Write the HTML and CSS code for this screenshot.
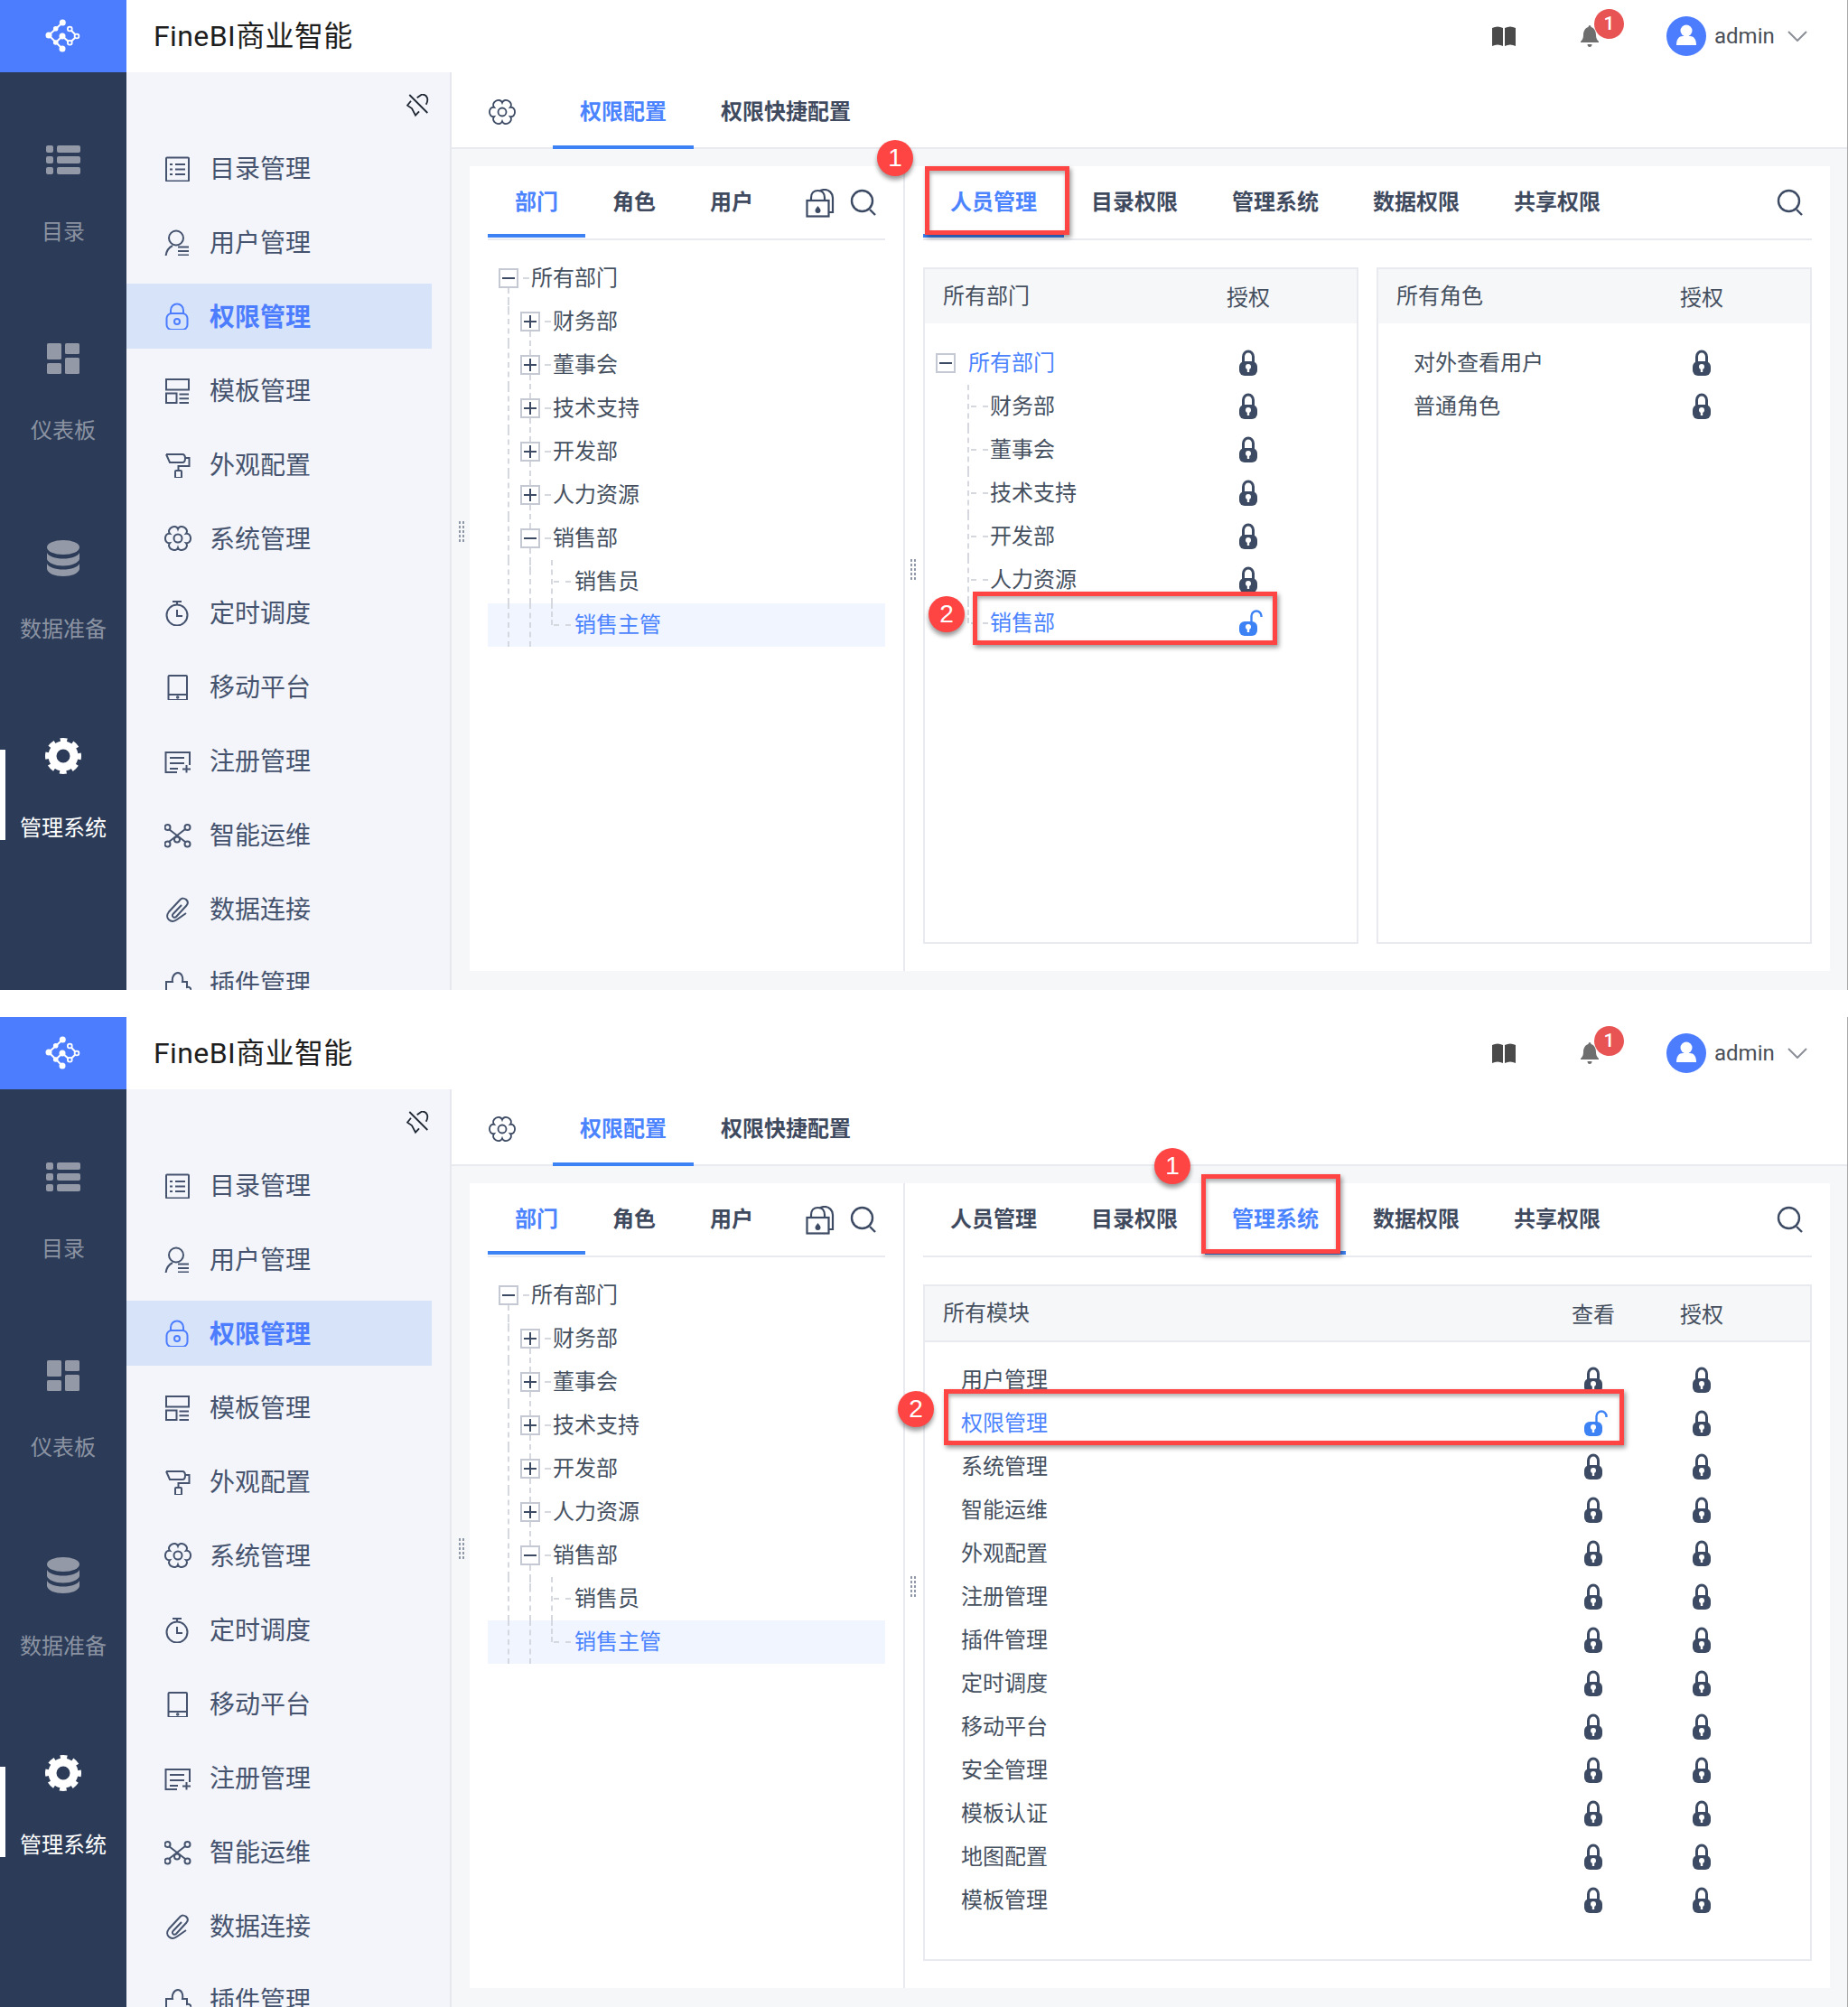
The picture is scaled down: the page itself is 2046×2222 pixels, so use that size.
FILE: index.html
```html
<!DOCTYPE html>
<html lang="zh-CN">
<head>
<meta charset="utf-8">
<title>FineBI商业智能</title>
<link rel="stylesheet" href="styles.css">
</head>
<body>
<svg class="sprite" xmlns="http://www.w3.org/2000/svg">
  <symbol id="logo" viewBox="0 0 40 40">
    <g fill="none" stroke="#fff" stroke-width="2"><path d="M19.300 5 4 19 19 34M19 20l-7.300 7M19 20l8.300 7.300L35 20l-7.700-8"/></g>
    <g fill="#fff"><circle cx="19.300" cy="5" r="3.500"/><circle cx="4" cy="19" r="3.500"/><circle cx="19" cy="34" r="3.500"/><circle cx="19" cy="20" r="3.500"/><circle cx="11.700" cy="11.700" r="2.800"/><circle cx="11.700" cy="27" r="2.800"/></g>
    <g fill="#4c7dff" stroke="#fff" stroke-width="1.800"><circle cx="27.300" cy="12" r="2.400"/><circle cx="35" cy="20" r="2.400"/><circle cx="27.300" cy="27.300" r="2.400"/></g>
  </symbol>
  <symbol id="r-list" viewBox="0 0 38 32"><rect width="8" height="8" rx="2"/><rect x="12" width="26" height="8" rx="2"/><rect y="12" width="8" height="8" rx="2"/><rect x="12" y="12" width="26" height="8" rx="2"/><rect y="24" width="8" height="8" rx="2"/><rect x="12" y="24" width="26" height="8" rx="2"/></symbol>
  <symbol id="r-dash" viewBox="0 0 36 34"><rect width="16" height="18" rx="1.500"/><rect x="20" width="16" height="12" rx="1.500"/><rect y="22" width="16" height="12" rx="1.500"/><rect x="20" y="16" width="16" height="18" rx="1.500"/></symbol>
  <symbol id="r-db" viewBox="0 0 36 40"><ellipse cx="18" cy="8" rx="18" ry="8"/><path d="M0 14c2 4 9 6.500 18 6.500S34 18 36 14v7c-1 4-9 7.500-18 7.500S1 25 0 21zM0 26c2 4 9 6.500 18 6.500S34 30 36 26v6c-1 5-9 8-18 8S1 37 0 32z"/></symbol>
  <symbol id="r-gear" viewBox="0 0 40 40"><circle cx="20" cy="20" r="12" fill="none" stroke="currentColor" stroke-width="9"/><circle cx="20" cy="20" r="17.500" fill="none" stroke="currentColor" stroke-width="5" stroke-dasharray="7.500 6.240" stroke-dashoffset="3.750"/></symbol>
  <symbol id="n-cat" viewBox="0 0 30 30"><rect x="2" y="3.500" width="25" height="26" rx="1"/><path d="M6 11h3M12 11h11M6 16.500h3M12 16.500h11M6 22h3M12 22h11"/></symbol>
  <symbol id="n-user" viewBox="0 0 30 30"><circle cx="13" cy="10.500" r="8"/><path d="M1.500 31C2 25 5 21 9 19M15 20.500h12M15 25h12M15 29.500h12"/></symbol>
  <symbol id="n-lock" viewBox="0 0 30 30"><rect x="2.500" y="12" width="23" height="18" rx="5.500"/><path d="M7 12V8.500a7 7 0 0 1 14 0V12"/><circle cx="14" cy="21" r="3"/></symbol>
  <symbol id="n-tpl" viewBox="0 0 30 30"><rect x="2" y="3" width="25" height="11.500"/><path d="M2 18.500h11.500V29H2zM16.500 19.500H27M16.500 24.200H27M16.500 29H27"/></symbol>
  <symbol id="n-roll" viewBox="0 0 30 30"><path d="M2 4h18c2 0 3 1.500 3 4.500s-1 4.500-3 4.500H6L2 4M23 8h4.500v9H15.500v5"/><rect x="12" y="22" width="7" height="8" rx="1"/></symbol>
  <symbol id="n-gear" viewBox="0 0 30 30"><circle cx="15" cy="15" r="4.500"/><path d="M23.920 9.850C30.760 8.630 30.760 21.370 23.920 20.150C28.400 25.470 17.370 31.830 15 25.300C12.630 31.830 1.600 25.470 6.080 20.150C-.76 21.370-.76 8.630 6.080 9.850C1.600 4.530 12.630-1.830 15 4.700C17.370-1.830 28.400 4.530 23.920 9.850z"/></symbol>
  <symbol id="n-time" viewBox="0 0 30 30"><circle cx="14" cy="18" r="11.500"/><path d="M9 3h10M14 3v3M14 12v7h6"/></symbol>
  <symbol id="n-mob" viewBox="0 0 30 30"><rect x="4.500" y="3" width="20.500" height="27" rx="1"/><path d="M4.500 24h20.500"/><circle cx="14.700" cy="27" r=".8"/></symbol>
  <symbol id="n-reg" viewBox="0 0 30 30"><path d="M14 28H1.500V6H28v14M6 12h16M6 18h16M6 24h9M20 24.500h9M24.500 20v8.500"/></symbol>
  <symbol id="n-ops" viewBox="0 0 30 30"><path d="m5 9 18 14M23 9 5 23"/><circle cx="14" cy="20.500" r="3" fill="#f3f5fa"/><g fill="#f3f5fa"><circle cx="3.500" cy="7" r="3"/><circle cx="25.500" cy="7" r="3"/><circle cx="3.500" cy="25.500" r="3"/><circle cx="25.500" cy="25.500" r="3"/></g></symbol>
  <symbol id="n-clip" viewBox="0 0 30 30"><path d="M19 11 9.500 21c-2 2.500 1.500 5 3.500 3L24.500 11.500c4-5-3-10.500-7-6.500L5 18.500c-5.500 7 2.500 13.500 9 8.500L24 20"/></symbol>
  <symbol id="n-plug" viewBox="0 0 30 30"><path d="M2 34V14h7c-1-5 2-10 6-10s6 5 5 10h5v6c4-1 5 3 5 5"/></symbol>
  <symbol id="pin" viewBox="0 0 26 26"><path d="M3.300 1l20 20M11.700 4.300 16.700.7C23 0 25 6 21.700 11.700M5 7.700 1 12.700 6 16l4 7.700 4-4.400"/></symbol>
  <symbol id="book" viewBox="0 0 26 22"><path d="M0 2c4-2 8-2 12 0v20c-4-2-8-2-12 0zM14 2c4-2 8-2 12 0v20c-4-2-8-2-12 0z"/></symbol>
  <symbol id="bell" viewBox="0 0 20 24"><path d="M10 0c1 0 1.500 1 1.500 2 4 1 5.500 5 5.500 9 0 3 1 5 3 7v1H0v-1c2-2 3-4 3-7 0-4 1.500-8 5.500-9C8.500 1 9 0 10 0zM7.500 21h5c0 2-1 3-2.500 3s-2.500-1-2.500-3z"/></symbol>
  <symbol id="avatar" viewBox="0 0 44 44"><circle cx="22" cy="22" r="22" fill="#4c7dff"/><circle cx="22" cy="16" r="6.500" fill="#fff"/><path d="M11 32c0-7 3-10 7-10h8c4 0 7 3 7 10z" fill="#fff"/></symbol>
  <symbol id="chev" viewBox="0 0 22 12"><path d="m1 1 10 10L21 1"/></symbol>
  <symbol id="search" viewBox="0 0 30 30"><circle cx="13.500" cy="13.500" r="11.500"/><path d="m22 23 6 6"/></symbol>
  <symbol id="locks" viewBox="0 0 32 32"><rect x="1.500" y="13" width="24" height="17.500"/><path d="M6 13V10c0-5 3-8 7.500-8s7.500 3 7.500 8v3M15 3c2-2 4-2 6-2 5 0 9 4 9 9v16h-4.500"/><path d="M13.500 19c2 2.500 3 3.500 3 5a3 3 0 0 1-6 0c0-1.500 1-2.500 3-5z" fill="currentColor" stroke="none"/></symbol>
  <symbol id="lock" viewBox="0 0 26 29"><path d="M4.500 14V8a5.500 6 0 0 1 11 0v6" fill="none" stroke="currentColor" stroke-width="3"/><path d="M6 13h8a6 6 0 0 1 6 6v4a6 6 0 0 1-6 6H6a6 6 0 0 1-6-6v-4a6 6 0 0 1 6-6z" fill="currentColor"/><circle cx="10" cy="19" r="3" fill="#fff"/><rect x="8.800" y="19" width="2.400" height="6" fill="#fff"/></symbol>
  <symbol id="unlock" viewBox="0 0 26 29"><path d="M13.500 14V7a5.500 5.500 0 0 1 11 0v1" fill="none" stroke="currentColor" stroke-width="2.400"/><path d="M6 13h8a6 6 0 0 1 6 6v4a6 6 0 0 1-6 6H6a6 6 0 0 1-6-6v-4a6 6 0 0 1 6-6z" fill="currentColor"/><circle cx="10" cy="19" r="3" fill="#fff"/><rect x="8.800" y="19" width="2.400" height="6" fill="#fff"/></symbol>
  <symbol id="plus" viewBox="0 0 22 22"><rect x="1" y="1" width="20" height="20" fill="#fff" stroke="#c5c9d3" stroke-width="2"/><path d="M4 11h14M11 4v14" stroke="#3d4a63" stroke-width="2"/></symbol>
  <symbol id="minus" viewBox="0 0 22 22"><rect x="1" y="1" width="20" height="20" fill="#fff" stroke="#c5c9d3" stroke-width="2"/><path d="M4 11h14" stroke="#3d4a63" stroke-width="2"/></symbol>
</svg>

<section class="shot">
  <aside class="rail">
    <div class="logo"><svg class="logo-ic"><use href="#logo"/></svg></div>
    <nav class="rail-nav">
      <div class="rail-item"><div class="rail-ic"><svg class="ic-list"><use href="#r-list"/></svg></div><div class="rail-label">目录</div></div>
      <div class="rail-item"><div class="rail-ic"><svg class="ic-dash"><use href="#r-dash"/></svg></div><div class="rail-label">仪表板</div></div>
      <div class="rail-item"><div class="rail-ic"><svg class="ic-db"><use href="#r-db"/></svg></div><div class="rail-label">数据准备</div></div>
      <div class="rail-item active"><div class="rail-ic"><svg class="ic-gear"><use href="#r-gear"/></svg></div><div class="rail-label">管理系统</div></div>
    </nav>
  </aside>
  <div class="main">
    <header class="topbar">
      <h1 class="title">FineBI商业智能</h1>
      <div class="tools">
        <svg class="ic-book"><use href="#book"/></svg>
        <span class="bell"><svg class="ic-bell"><use href="#bell"/></svg><b class="badge">1</b></span>
        <svg class="ic-avatar"><use href="#avatar"/></svg>
        <span class="uname">admin</span>
        <svg class="ic-chev"><use href="#chev"/></svg>
      </div>
    </header>
    <div class="work">
      <nav class="subnav">
        <div class="pinrow"><svg class="ic-pin"><use href="#pin"/></svg></div>
        <div class="sub-item"><svg class="ni"><use href="#n-cat"/></svg>目录管理</div>
        <div class="sub-item"><svg class="ni"><use href="#n-user"/></svg>用户管理</div>
        <div class="sub-item on"><svg class="ni"><use href="#n-lock"/></svg>权限管理</div>
        <div class="sub-item"><svg class="ni"><use href="#n-tpl"/></svg>模板管理</div>
        <div class="sub-item"><svg class="ni"><use href="#n-roll"/></svg>外观配置</div>
        <div class="sub-item"><svg class="ni"><use href="#n-gear"/></svg>系统管理</div>
        <div class="sub-item"><svg class="ni"><use href="#n-time"/></svg>定时调度</div>
        <div class="sub-item"><svg class="ni"><use href="#n-mob"/></svg>移动平台</div>
        <div class="sub-item"><svg class="ni"><use href="#n-reg"/></svg>注册管理</div>
        <div class="sub-item"><svg class="ni"><use href="#n-ops"/></svg>智能运维</div>
        <div class="sub-item"><svg class="ni"><use href="#n-clip"/></svg>数据连接</div>
        <div class="sub-item"><svg class="ni"><use href="#n-plug"/></svg>插件管理</div>
      </nav>
      <div class="content">
        <div class="pagetabs">
          <svg class="ic-set"><use href="#n-gear"/></svg>
          <span class="ptab on">权限配置</span>
          <span class="ptab">权限快捷配置</span>
        </div>
        <div class="cards">
          <div class="card-left">
            <div class="tabs">
              <span class="tab on">部门</span><span class="tab">角色</span><span class="tab">用户</span>
              <span class="tab-tools"><svg class="ic-locks"><use href="#locks"/></svg><svg class="ic-search"><use href="#search"/></svg></span>
            </div>
            <div class="tree">
              <div class="tnode"><span class="tog"><svg class="bx"><use href="#minus"/></svg></span>所有部门</div>
              <div class="tnode"><i class="ind"></i><span class="tog"><svg class="bx"><use href="#plus"/></svg></span>财务部</div>
              <div class="tnode"><i class="ind"></i><span class="tog"><svg class="bx"><use href="#plus"/></svg></span>董事会</div>
              <div class="tnode"><i class="ind"></i><span class="tog"><svg class="bx"><use href="#plus"/></svg></span>技术支持</div>
              <div class="tnode"><i class="ind"></i><span class="tog"><svg class="bx"><use href="#plus"/></svg></span>开发部</div>
              <div class="tnode"><i class="ind"></i><span class="tog"><svg class="bx"><use href="#plus"/></svg></span>人力资源</div>
              <div class="tnode"><i class="ind"></i><span class="tog"><svg class="bx"><use href="#minus"/></svg></span>销售部</div>
              <div class="tnode"><i class="ind"></i><i class="ind"></i><i class="leaf"></i>销售员</div>
              <div class="tnode sel"><i class="ind"></i><i class="ind"></i><i class="leaf last"></i>销售主管</div>
            </div>
          </div>
          <div class="card-right">
            <div class="tabs">
              <span class="tab wide on">人员管理</span><span class="tab wide">目录权限</span><span class="tab wide">管理系统</span><span class="tab wide">数据权限</span><span class="tab wide">共享权限</span>
              <span class="tab-tools"><svg class="ic-search"><use href="#search"/></svg></span>
            </div>
            <div class="panels">
              <div class="panel">
                <div class="phead"><span class="pname">所有部门</span><span class="pcell">授权</span></div>
                <div class="pbody">
                  <div class="prow"><span class="pname tr blue"><svg class="bx bx-p"><use href="#minus"/></svg>所有部门</span><span class="pcell"><svg class="lk"><use href="#lock"/></svg></span></div>
                  <div class="prow"><span class="pname tr"><i class="leaf pl"></i>财务部</span><span class="pcell"><svg class="lk"><use href="#lock"/></svg></span></div>
                  <div class="prow"><span class="pname tr"><i class="leaf pl"></i>董事会</span><span class="pcell"><svg class="lk"><use href="#lock"/></svg></span></div>
                  <div class="prow"><span class="pname tr"><i class="leaf pl"></i>技术支持</span><span class="pcell"><svg class="lk"><use href="#lock"/></svg></span></div>
                  <div class="prow"><span class="pname tr"><i class="leaf pl"></i>开发部</span><span class="pcell"><svg class="lk"><use href="#lock"/></svg></span></div>
                  <div class="prow"><span class="pname tr"><i class="leaf pl"></i>人力资源</span><span class="pcell"><svg class="lk"><use href="#lock"/></svg></span></div>
                  <div class="prow"><span class="pname tr blue"><i class="leaf pl last"></i>销售部</span><span class="pcell"><svg class="lk blue"><use href="#unlock"/></svg></span></div>
                </div>
              </div>
              <div class="panel">
                <div class="phead"><span class="pname">所有角色</span><span class="pcell">授权</span></div>
                <div class="pbody">
                  <div class="prow"><span class="pname role">对外查看用户</span><span class="pcell"><svg class="lk"><use href="#lock"/></svg></span></div>
                  <div class="prow"><span class="pname role">普通角色</span><span class="pcell"><svg class="lk"><use href="#lock"/></svg></span></div>
                </div>
              </div>
            </div>
          </div>
        </div>
      </div>
    </div>
  </div>
  <i class="split split-a"></i><i class="split split-b"></i>
  <div class="mark mark-t1"></div>
  <div class="mark mark-r1"></div>
  <b class="num num-a1">1</b>
  <b class="num num-b1">2</b>
</section>

<section class="shot">
  <aside class="rail">
    <div class="logo"><svg class="logo-ic"><use href="#logo"/></svg></div>
    <nav class="rail-nav">
      <div class="rail-item"><div class="rail-ic"><svg class="ic-list"><use href="#r-list"/></svg></div><div class="rail-label">目录</div></div>
      <div class="rail-item"><div class="rail-ic"><svg class="ic-dash"><use href="#r-dash"/></svg></div><div class="rail-label">仪表板</div></div>
      <div class="rail-item"><div class="rail-ic"><svg class="ic-db"><use href="#r-db"/></svg></div><div class="rail-label">数据准备</div></div>
      <div class="rail-item active"><div class="rail-ic"><svg class="ic-gear"><use href="#r-gear"/></svg></div><div class="rail-label">管理系统</div></div>
    </nav>
  </aside>
  <div class="main">
    <header class="topbar">
      <h1 class="title">FineBI商业智能</h1>
      <div class="tools">
        <svg class="ic-book"><use href="#book"/></svg>
        <span class="bell"><svg class="ic-bell"><use href="#bell"/></svg><b class="badge">1</b></span>
        <svg class="ic-avatar"><use href="#avatar"/></svg>
        <span class="uname">admin</span>
        <svg class="ic-chev"><use href="#chev"/></svg>
      </div>
    </header>
    <div class="work">
      <nav class="subnav">
        <div class="pinrow"><svg class="ic-pin"><use href="#pin"/></svg></div>
        <div class="sub-item"><svg class="ni"><use href="#n-cat"/></svg>目录管理</div>
        <div class="sub-item"><svg class="ni"><use href="#n-user"/></svg>用户管理</div>
        <div class="sub-item on"><svg class="ni"><use href="#n-lock"/></svg>权限管理</div>
        <div class="sub-item"><svg class="ni"><use href="#n-tpl"/></svg>模板管理</div>
        <div class="sub-item"><svg class="ni"><use href="#n-roll"/></svg>外观配置</div>
        <div class="sub-item"><svg class="ni"><use href="#n-gear"/></svg>系统管理</div>
        <div class="sub-item"><svg class="ni"><use href="#n-time"/></svg>定时调度</div>
        <div class="sub-item"><svg class="ni"><use href="#n-mob"/></svg>移动平台</div>
        <div class="sub-item"><svg class="ni"><use href="#n-reg"/></svg>注册管理</div>
        <div class="sub-item"><svg class="ni"><use href="#n-ops"/></svg>智能运维</div>
        <div class="sub-item"><svg class="ni"><use href="#n-clip"/></svg>数据连接</div>
        <div class="sub-item"><svg class="ni"><use href="#n-plug"/></svg>插件管理</div>
      </nav>
      <div class="content">
        <div class="pagetabs">
          <svg class="ic-set"><use href="#n-gear"/></svg>
          <span class="ptab on">权限配置</span>
          <span class="ptab">权限快捷配置</span>
        </div>
        <div class="cards">
          <div class="card-left">
            <div class="tabs">
              <span class="tab on">部门</span><span class="tab">角色</span><span class="tab">用户</span>
              <span class="tab-tools"><svg class="ic-locks"><use href="#locks"/></svg><svg class="ic-search"><use href="#search"/></svg></span>
            </div>
            <div class="tree">
              <div class="tnode"><span class="tog"><svg class="bx"><use href="#minus"/></svg></span>所有部门</div>
              <div class="tnode"><i class="ind"></i><span class="tog"><svg class="bx"><use href="#plus"/></svg></span>财务部</div>
              <div class="tnode"><i class="ind"></i><span class="tog"><svg class="bx"><use href="#plus"/></svg></span>董事会</div>
              <div class="tnode"><i class="ind"></i><span class="tog"><svg class="bx"><use href="#plus"/></svg></span>技术支持</div>
              <div class="tnode"><i class="ind"></i><span class="tog"><svg class="bx"><use href="#plus"/></svg></span>开发部</div>
              <div class="tnode"><i class="ind"></i><span class="tog"><svg class="bx"><use href="#plus"/></svg></span>人力资源</div>
              <div class="tnode"><i class="ind"></i><span class="tog"><svg class="bx"><use href="#minus"/></svg></span>销售部</div>
              <div class="tnode"><i class="ind"></i><i class="ind"></i><i class="leaf"></i>销售员</div>
              <div class="tnode sel"><i class="ind"></i><i class="ind"></i><i class="leaf last"></i>销售主管</div>
            </div>
          </div>
          <div class="card-right">
            <div class="tabs">
              <span class="tab wide">人员管理</span><span class="tab wide">目录权限</span><span class="tab wide on">管理系统</span><span class="tab wide">数据权限</span><span class="tab wide">共享权限</span>
              <span class="tab-tools"><svg class="ic-search"><use href="#search"/></svg></span>
            </div>
            <div class="panels">
              <div class="panel">
                <div class="phead lined"><span class="pname">所有模块</span><span class="pcell mc">查看</span><span class="pcell mc">授权</span></div>
                <div class="pbody">
                  <div class="prow mod"><span class="pname role">用户管理</span><span class="pcell mc"><svg class="lk"><use href="#lock"/></svg></span><span class="pcell mc"><svg class="lk"><use href="#lock"/></svg></span></div>
                  <div class="prow mod"><span class="pname role blue">权限管理</span><span class="pcell mc"><svg class="lk blue"><use href="#unlock"/></svg></span><span class="pcell mc"><svg class="lk"><use href="#lock"/></svg></span></div>
                  <div class="prow mod"><span class="pname role">系统管理</span><span class="pcell mc"><svg class="lk"><use href="#lock"/></svg></span><span class="pcell mc"><svg class="lk"><use href="#lock"/></svg></span></div>
                  <div class="prow mod"><span class="pname role">智能运维</span><span class="pcell mc"><svg class="lk"><use href="#lock"/></svg></span><span class="pcell mc"><svg class="lk"><use href="#lock"/></svg></span></div>
                  <div class="prow mod"><span class="pname role">外观配置</span><span class="pcell mc"><svg class="lk"><use href="#lock"/></svg></span><span class="pcell mc"><svg class="lk"><use href="#lock"/></svg></span></div>
                  <div class="prow mod"><span class="pname role">注册管理</span><span class="pcell mc"><svg class="lk"><use href="#lock"/></svg></span><span class="pcell mc"><svg class="lk"><use href="#lock"/></svg></span></div>
                  <div class="prow mod"><span class="pname role">插件管理</span><span class="pcell mc"><svg class="lk"><use href="#lock"/></svg></span><span class="pcell mc"><svg class="lk"><use href="#lock"/></svg></span></div>
                  <div class="prow mod"><span class="pname role">定时调度</span><span class="pcell mc"><svg class="lk"><use href="#lock"/></svg></span><span class="pcell mc"><svg class="lk"><use href="#lock"/></svg></span></div>
                  <div class="prow mod"><span class="pname role">移动平台</span><span class="pcell mc"><svg class="lk"><use href="#lock"/></svg></span><span class="pcell mc"><svg class="lk"><use href="#lock"/></svg></span></div>
                  <div class="prow mod"><span class="pname role">安全管理</span><span class="pcell mc"><svg class="lk"><use href="#lock"/></svg></span><span class="pcell mc"><svg class="lk"><use href="#lock"/></svg></span></div>
                  <div class="prow mod"><span class="pname role">模板认证</span><span class="pcell mc"><svg class="lk"><use href="#lock"/></svg></span><span class="pcell mc"><svg class="lk"><use href="#lock"/></svg></span></div>
                  <div class="prow mod"><span class="pname role">地图配置</span><span class="pcell mc"><svg class="lk"><use href="#lock"/></svg></span><span class="pcell mc"><svg class="lk"><use href="#lock"/></svg></span></div>
                  <div class="prow mod"><span class="pname role">模板管理</span><span class="pcell mc"><svg class="lk"><use href="#lock"/></svg></span><span class="pcell mc"><svg class="lk"><use href="#lock"/></svg></span></div>
                </div>
              </div>
            </div>
          </div>
        </div>
      </div>
    </div>
  </div>
  <i class="split split-a"></i><i class="split split-b"></i>
  <div class="mark mark-t2"></div>
  <div class="mark mark-r2"></div>
  <b class="num num-a2">1</b>
  <b class="num num-b2">2</b>
</section>
</body>
</html>
```
FILE: styles.css
```css
* { box-sizing: border-box; }
html, body { margin: 0; padding: 0; background: #fff; }
body {
  width: 2046px;
  font-family: Roboto, "Noto Sans CJK SC", sans-serif;
  font-size: 24px;
  color: #45505f;
}
.sprite { position: absolute; width: 0; height: 0; overflow: hidden; }
svg { display: block; flex: none; }

.shot { position: relative; display: flex; width: 2046px; height: 1096px; overflow: hidden; }
.shot + .shot { margin-top: 30px; }

/* left rail */
.rail { width: 140px; flex: none; background: #2c3c58; }
.logo { height: 80px; background: #4c7dff; display: flex; align-items: center; justify-content: center; }
.logo-ic { width: 40px; height: 40px; }
.rail-nav { padding-top: 20px; }
.rail-item { position: relative; height: 220px; display: flex; flex-direction: column; align-items: center; color: #8b93a2; fill: #9399a6; }
.rail-ic { height: 154px; display: flex; align-items: center; justify-content: center; }
.rail-label { line-height: 34px; margin-top: -14px; font-size: 24px; }
.rail-item.active { color: #fff; fill: #fff; }
.rail-item.active::before { content: ""; position: absolute; left: 0; top: 70px; width: 6px; height: 100px; background: #fff; }
.ic-list { width: 38px; height: 32px; }
.ic-dash { width: 36px; height: 34px; }
.ic-db { width: 36px; height: 40px; margin-top: 2px; }
.ic-gear { width: 40px; height: 40px; }

/* top bar */
.main { flex: 1; min-width: 0; display: flex; flex-direction: column; border-right: 1px solid #a8a8a8; }
.topbar { height: 80px; flex: none; display: flex; align-items: center; padding: 0 44px 0 30px; background: #fff; }
.title { margin: 0; font-size: 32px; font-weight: 400; line-height: 40px; letter-spacing: .4px; color: #1e1e1e; }
.tools { margin-left: auto; display: flex; align-items: center; }
.ic-book { width: 26px; height: 22px; fill: #4a4a4a; }
.bell { position: relative; margin-left: 72px; }
.ic-bell { width: 20px; height: 24px; fill: #6e6e6e; }
.badge { position: absolute; left: 15px; top: -18px; width: 33px; height: 33px; border-radius: 50%; background: #e85454; color: #fff; font-size: 21px; line-height: 33px; text-align: center; font-weight: 500; }
.ic-avatar { width: 44px; height: 44px; margin-left: 75px; }
.uname { margin-left: 9px; width: 65px; font-size: 24px; line-height: 34px; color: #4a4f57; }
.ic-chev { width: 22px; height: 12px; margin-left: 16px; fill: none; stroke: #8b8f96; stroke-width: 2; }

/* sub navigation */
.work { flex: 1; min-height: 0; display: flex; }
.subnav { width: 360px; flex: none; background: #f3f5fa; border-right: 2px solid #e6e8ee; overflow: hidden; }
.pinrow { height: 70px; padding: 24px 22px 0 0; display: flex; justify-content: flex-end; }
.ic-pin { width: 26px; height: 26px; fill: none; stroke: #1f2733; stroke-width: 1.8; }
.sub-item { height: 72px; margin: 0 20px 10px 0; padding: 0 0 3px 42px; display: flex; align-items: center; gap: 20px; font-size: 28px; color: #45536e; }
.sub-item.on { background: #d7e3f8; color: #4c7dff; font-weight: 700; }
.ni { width: 30px; height: 30px; margin-top: 3px; fill: none; stroke: currentColor; stroke-width: 2; overflow: visible; }

/* page tabs */
.content { flex: 1; min-width: 0; display: flex; flex-direction: column; background: #f6f7f9; }
.pagetabs { height: 85px; flex: none; background: #fff; border-bottom: 2px solid #e8eaef; display: flex; padding-left: 41px; align-items: stretch; }
.ic-set { width: 30px; height: 30px; margin: 29px 41px 0 0; color: #3d4a63; fill: none; stroke: currentColor; stroke-width: 1.8; overflow: visible; }
.ptab { width: 156px; margin-bottom: -2px; padding-top: 24px; line-height: 40px; font-weight: 700; text-align: center; color: #3f4a5f; }
.ptab + .ptab { width: 204px; }
.ptab.on { color: #4c84ff; border-bottom: 4px solid #3d82f5; height: 85px; }

/* cards */
.cards { flex: 1; min-height: 0; display: flex; padding: 19px 19px 21px 20px; }
.card-left { width: 482px; flex: none; background: #fff; border-right: 2px solid #e8eaef; padding: 0 20px; }
.card-right { flex: 1; min-width: 0; background: #fff; padding: 0 20px; display: flex; flex-direction: column; }
.tabs { height: 82px; flex: none; display: flex; border-bottom: 2px solid #e8eaef; }
.tab { width: 108px; height: 82px; line-height: 80px; text-align: center; font-weight: 700; color: #3f4a5f; }
.tab.wide { width: 156px; }
.tab.on { color: #4c84ff; border-bottom: 4px solid #3d82f5; height: 79px; }
.tab-tools { margin-left: auto; display: flex; gap: 17px; padding: 25px 9px 0 0; color: #3d4a63; }
.ic-locks { width: 32px; height: 32px; fill: none; stroke: currentColor; stroke-width: 2.2; }
.ic-search { width: 30px; height: 30px; fill: none; stroke: currentColor; stroke-width: 2.4; }

/* tree */
.tree { margin-top: 18px; }
.tnode { position: relative; height: 48px; padding-left: 12px; display: flex; align-items: center; line-height: 48px; }
.tnode.sel { background: #f0f5ff; color: #4c84ff; }
.tog { position: relative; width: 22px; height: 22px; margin-right: 14px; flex: none; }
.bx { width: 22px; height: 22px; }
.tog::before { content: ""; position: absolute; left: 10px; top: 22px; height: 26px; border-left: 2px dashed #d5d8de; }
.tog::after { content: ""; position: absolute; left: 27px; top: 10px; width: 7px; border-top: 2px dashed #d5d8de; }
.ind { position: relative; width: 24px; align-self: stretch; flex: none; }
.ind::before { content: ""; position: absolute; left: 10px; top: 0; bottom: 0; border-left: 2px dashed #d5d8de; }
.leaf { position: relative; width: 36px; align-self: stretch; flex: none; }
.leaf::before { content: ""; position: absolute; left: 10px; top: 0; bottom: 0; border-left: 2px dashed #d5d8de; }
.leaf.last::before { bottom: 50%; }
.leaf::after { content: ""; position: absolute; left: 13px; top: 50%; width: 19px; margin-top: -1px; border-top: 2px dashed #d5d8de; }

/* panels */
.panels { flex: 1; min-height: 0; display: flex; gap: 20px; margin: 30px 0 30px; }
.panel { flex: 1; min-width: 0; border: 2px solid #e8eaef; background: #fff; }
.phead { height: 60px; background: #f6f7f9; display: flex; align-items: center; padding-left: 20px; padding-right: 70px; line-height: 40px; }
.phead.lined { height: 62px; border-bottom: 2px solid #e8eaef; padding-right: 60px; }
.phead .pcell { padding-top: 4px; }
.pname { flex: 1; min-width: 0; }
.pcell { width: 100px; flex: none; display: flex; justify-content: center; }
.pcell.mc { width: 120px; }
.pbody { padding-top: 20px; }
.lined + .pbody { padding-top: 18px; }
.prow { height: 48px; display: flex; align-items: center; padding-right: 70px; line-height: 48px; }
.prow.mod { padding-right: 60px; }
.pname.tr { display: flex; align-items: center; align-self: stretch; padding-left: 12px; }
.pname.role { padding-left: 39px; }
.mod .pname.role { padding-left: 40px; }
.blue { color: #4c84ff; }
.lk { width: 26px; height: 29px; margin: -2px 0 0 6px; color: #3d4a63; }
.lk.blue { color: #3d82f5; }
.bx-p { margin-right: 14px; }
.leaf.pl { width: 25px; margin-left: 35px; }
.leaf.pl::before { left: 0; }
.leaf.pl::after { left: 4px; }

/* over content */
.split { position: absolute; width: 7px; height: 24px; background: radial-gradient(circle, #8e96a6 1.1px, transparent 1.4px) 0 0 / 4px 5px; }
.split-a { left: 507px; top: 576px; }
.split-b { left: 1007px; top: 618px; }
.mark { position: absolute; border: 5px solid #ff4444; box-shadow: 2px 3px 5px rgba(0,0,0,.4), inset 1px 3px 4px rgba(0,0,0,.3); }
.mark-t1 { left: 1024px; top: 184px; width: 160px; height: 76px; }
.mark-r1 { left: 1077px; top: 655px; width: 337px; height: 59px; }
.mark-t2 { left: 1330px; top: 174px; width: 154px; height: 88px; }
.mark-r2 { left: 1045px; top: 412px; width: 753px; height: 62px; }
.num { position: absolute; width: 40px; height: 40px; border-radius: 50%; background: #ff4444; color: #fff; font: 400 28px/40px "Liberation Sans", sans-serif; text-align: center; box-shadow: 0 4px 5px rgba(0,0,0,.4); }
.num-a1 { left: 971px; top: 155px; }
.num-b1 { left: 1028px; top: 660px; }
.num-a2 { left: 1278px; top: 145px; }
.num-b2 { left: 994px; top: 414px; }
```
